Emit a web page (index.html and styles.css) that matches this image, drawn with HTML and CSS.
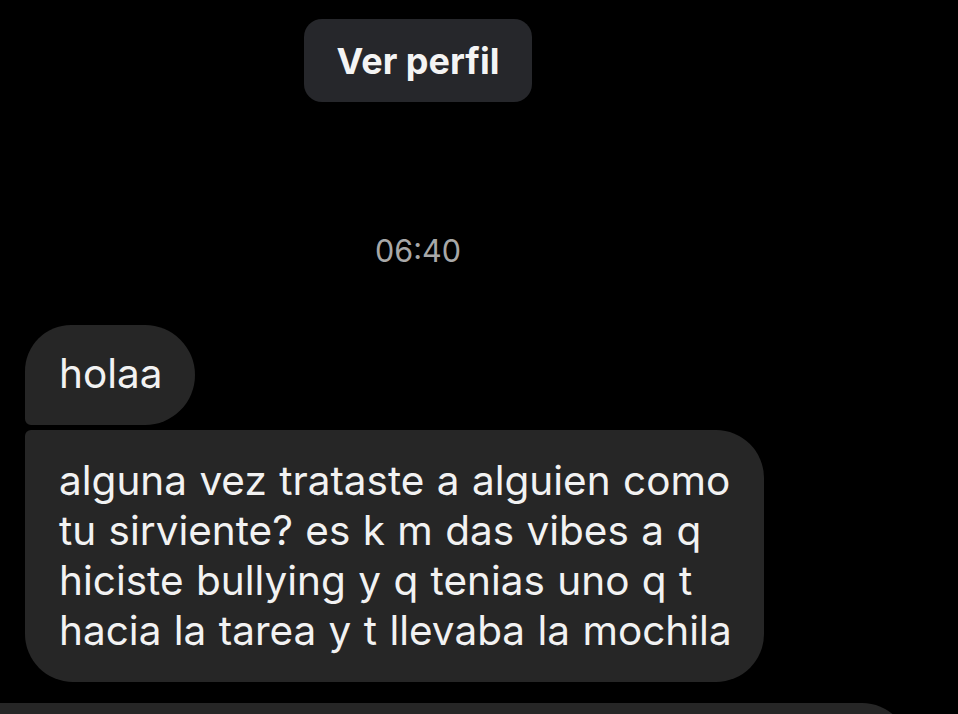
FILE: index.html
```html
<!DOCTYPE html>
<html lang="es">
<head>
<meta charset="UTF-8">
<meta name="viewport" content="width=device-width, initial-scale=1.0">
<title>Chat</title>
<link rel="stylesheet" href="styles.css">
</head>
<body>
<div class="chat">
    <div class="profile-row">
        <button class="profile-btn">Ver perfil</button>
    </div>

    <div class="timestamp">06:40</div>

    <div class="thread">
        <div class="bubble bubble-first">holaa</div>
        <div class="bubble bubble-last">
            alguna vez trataste a alguien como<br>
            tu sirviente? es k m das vibes a q<br>
            hiciste bullying y q tenias uno q t<br>
            hacia la tarea y t llevaba la mochila
        </div>
    </div>

    <!-- next message, cut off by the bottom of the screen -->
    <div class="bubble-next"></div>
</div>
</body>
</html>
```

FILE: styles.css
```css
/* Dark chat screen */
body {
    margin: 0;
    padding: 0;
    background-color: #000;
    font-family: Inter, Roboto, "Noto Sans", Arial, sans-serif;
    color: #f2f2f2;
    overflow: hidden;
}
.chat {
    width: 836px;
    display: flex;
    flex-direction: column;
}
.profile-row {
    display: flex;
    justify-content: center;
    padding-top: 19px;
}
.profile-btn {
    height: 83px;
    padding: 0 33px;
    background-color: #26272b;
    color: #f4f4f4;
    border: none;
    border-radius: 18px;
    font-family: Inter, Roboto, "Noto Sans", Arial, sans-serif;
    font-size: 36px;
    font-weight: 700;
    cursor: pointer;
}
.timestamp {
    margin-top: 133px;
    text-align: center;
    font-size: 30.5px;
    line-height: 32px;
    color: #a8a8a8;
}
.thread {
    margin-top: 58px;
    padding-left: 25px;
    display: flex;
    flex-direction: column;
    align-items: flex-start;
    gap: 5px;
}
.bubble {
    background-color: #262626;
    padding: 24px 32px 26px 34px;
    font-size: 40.5px;
    line-height: 50px;
    word-spacing: 1px;
    white-space: nowrap;
}
.bubble-first {
    border-radius: 46px 50px 50px 6px;
}
.bubble-last {
    padding-top: 26px;
    border-radius: 6px 48px 48px 48px;
}
.bubble-next {
    margin-top: 21px;
    width: 910px;
    height: 60px;
    background-color: #262626;
    border-top-right-radius: 48px;
}
```
